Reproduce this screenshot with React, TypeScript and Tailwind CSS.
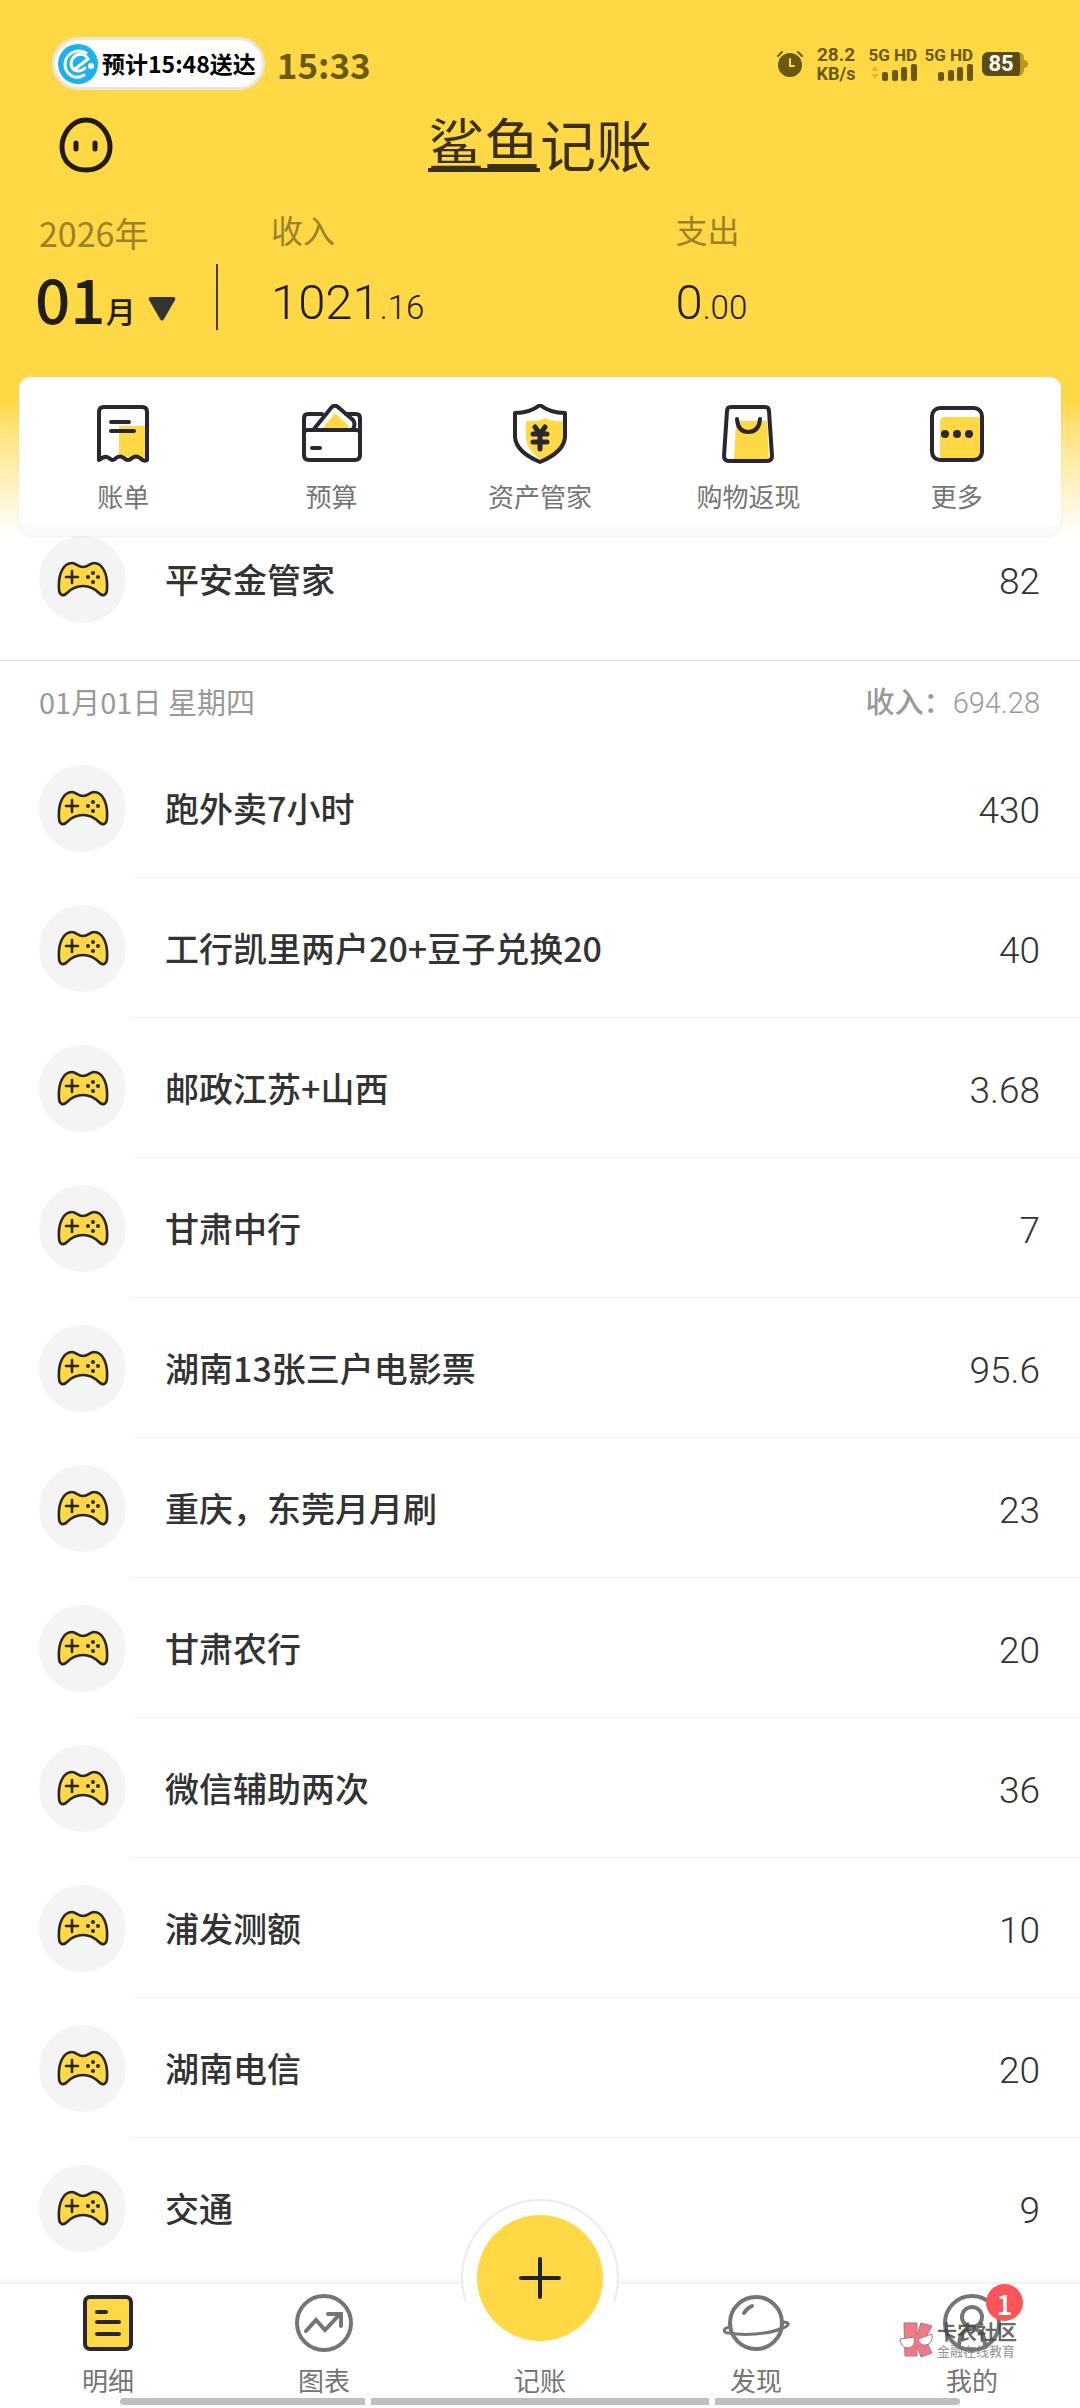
import type { ReactNode } from "react";

type Transaction = {
  id: number;
  name: string;
  amount: string;
};

const previousDay: Transaction[] = [{ id: 1, name: "平安金管家", amount: "82" }];

const newYearDay: Transaction[] = [
  { id: 2, name: "跑外卖7小时", amount: "430" },
  { id: 3, name: "工行凯里两户20+豆子兑换20", amount: "40" },
  { id: 4, name: "邮政江苏+山西", amount: "3.68" },
  { id: 5, name: "甘肃中行", amount: "7" },
  { id: 6, name: "湖南13张三户电影票", amount: "95.6" },
  { id: 7, name: "重庆，东莞月月刷", amount: "23" },
  { id: 8, name: "甘肃农行", amount: "20" },
  { id: 9, name: "微信辅助两次", amount: "36" },
  { id: 10, name: "浦发测额", amount: "10" },
  { id: 11, name: "湖南电信", amount: "20" },
  { id: 12, name: "交通", amount: "9" },
];

function BillIcon() {
  return (
    <svg width="60" height="60" viewBox="0 0 60 60" fill="none" stroke="#2b2731" strokeWidth="4" strokeLinecap="round" strokeLinejoin="round">
      <path d="M26 22H54V54L47 53L41 56L34 52L26 55Z" fill="#ffd945" stroke="none" />
      <path d="M6 56V8Q6 3 11 3H49Q54 3 54 8V56Q51 58 47 54Q43 51 39 54Q35 58 31 54Q27 51 23 54Q20 58 16 54Q12 51 6 56Z" />
      <path d="M18 18H36M18 27H41" />
    </svg>
  );
}

function BudgetIcon() {
  return (
    <svg width="60" height="60" viewBox="0 0 60 60" fill="none" stroke="#2b2731" strokeWidth="4" strokeLinecap="round" strokeLinejoin="round">
      <path d="M20 25L33 9L46 21V25Z" fill="#ffd945" stroke="none" />
      <path d="M20 10H6Q2 10 2 14V51Q2 56 7 56H53Q58 56 58 51V14Q58 10 54 10H44" />
      <path d="M2 29Q2 26 6 26H54Q58 26 58 29" />
      <path d="M12 25L29 4Q32 0 36 3L51 16Q54 20 51 25" />
      <path d="M10 44H18" />
    </svg>
  );
}

function ShieldIcon() {
  return (
    <svg width="60" height="60" viewBox="0 0 60 60" fill="none" stroke="#2b2731" strokeWidth="4" strokeLinecap="round" strokeLinejoin="round">
      <path d="M16 17Q28 18 35 14Q42 18 54 17V34Q50 49 32 56Q16 47 16 32Z" fill="#ffd945" stroke="none" />
      <path d="M30 1Q20 9 5 9V33Q6 48 30 58Q54 48 55 33V9Q40 9 30 1Z" />
      <path d="M25 23L30 30L35 23M23 30H37M23 38H37M30 30V45" strokeWidth="5" />
    </svg>
  );
}

function ShoppingIcon() {
  return (
    <svg width="60" height="60" viewBox="0 0 60 60" fill="none" stroke="#2b2731" strokeWidth="4" strokeLinecap="round" strokeLinejoin="round">
      <path d="M18 17H49L51 56H16Z" fill="#ffd945" stroke="none" />
      <path d="M13 3H47Q51 3 51 7L54 52Q54 57 49 57H11Q6 57 6 52L9 7Q9 3 13 3Z" />
      <path d="M19 15Q20 28 30 28Q41 28 42 15" />
    </svg>
  );
}

function MoreIcon() {
  return (
    <svg width="60" height="60" viewBox="0 0 60 60" fill="none">
      <path d="M13 18Q13 13 18 13H54V56H13Z" fill="#ffd945" />
      <rect x="5" y="4" width="50" height="52" rx="8" stroke="#2b2731" strokeWidth="4" />
      <g fill="#2b2731">
        <circle cx="18" cy="30" r="4" />
        <circle cx="30" cy="30" r="4" />
        <circle cx="42" cy="30" r="4" />
      </g>
    </svg>
  );
}

function GamepadIcon() {
  return (
    <svg width="52" height="36" viewBox="0 0 52 36" fill="none" stroke="#2a2723" strokeWidth="2.6" strokeLinecap="round" strokeLinejoin="round">
      <path d="M15 2C19 2 21 6 26 6C31 6 33 2 37 2C45 2 51 12 50 28C50 34 46 36 42 32C37 27 33 25 26 25C19 25 15 27 10 32C6 36 2 34 2 28C1 12 7 2 15 2Z" fill="#ffd945" />
      <path d="M15 10V22M9 16H21" />
      <g fill="#2a2723" stroke="none">
        <circle cx="36" cy="12" r="2" />
        <circle cx="36" cy="21" r="2" />
        <circle cx="31" cy="16" r="2" />
        <circle cx="41" cy="16" r="2" />
      </g>
    </svg>
  );
}

function FaceIcon() {
  return (
    <svg width="54" height="56" viewBox="0 0 54 56" fill="none" stroke="#221b08" strokeWidth="5" strokeLinecap="round">
      <path d="M27 3C42 3 51 18 51 30C51 44 41 53 27 53C13 53 3 44 3 30C3 18 12 3 27 3Z" />
      <path d="M17 26V32M36 26V32" />
    </svg>
  );
}

function DeliveryLogo() {
  return (
    <svg className="shrink-0" width="40" height="40" viewBox="0 0 40 40" fill="none" stroke="#fff" strokeWidth="3" strokeLinecap="round">
      <circle cx="20" cy="20" r="20" fill="#1fb1ea" stroke="none" />
      <path d="M28 9C19 4 8 9 7 20C7 30 17 37 26 31" />
      <path d="M17 25L30 15C27 9 19 9 15 14C11 20 14 27 20 27C23 27 25 26 27 24" />
      <circle cx="33" cy="22" r="3" fill="#fff" stroke="none" />
    </svg>
  );
}

function AlarmIcon() {
  return (
    <svg width="26" height="26" viewBox="0 0 26 26" fill="none" strokeLinecap="round">
      <circle cx="13" cy="14" r="12" fill="#6a5912" />
      <path d="M1 5L5 1M21 1L25 5" stroke="#6a5912" strokeWidth="2" />
      <path d="M13 8V15H17" stroke="#ffd945" strokeWidth="2" />
    </svg>
  );
}

function Signal({ arrows = false }: { arrows?: boolean }) {
  return (
    <div className="flex w-12 flex-col items-end">
      <span className="text-[17px] leading-4 font-bold whitespace-nowrap">5G HD</span>
      <svg className="mt-px" width="48" height="17" viewBox="0 0 48 17" fill="#6a5912">
        {arrows && <path d="M2 7L6 2L10 7ZM2 10L6 15L10 10Z" fill="#e0b92c" />}
        <rect x="13" y="8" width="6" height="9" rx="2" />
        <rect x="23" y="6" width="6" height="11" rx="2" />
        <rect x="32" y="3" width="6" height="14" rx="2" />
        <rect x="42" y="0" width="6" height="17" rx="2" />
      </svg>
    </div>
  );
}

function StatusBar() {
  return (
    <div className="flex items-center justify-between px-[52px] text-[#6a5912]">
      <div className="flex items-center gap-3">
        <div className="flex h-[53px] items-center gap-1 rounded-full border-3 border-[#ece6d8] bg-white pr-1.5 pl-[3px] text-[23px] font-bold text-black">
          <DeliveryLogo />
          <span>预计15:48送达</span>
        </div>
        <span className="text-[35px] leading-10 font-bold">15:33</span>
      </div>
      <div className="flex items-center gap-2 font-[Roboto,sans-serif]">
        <AlarmIcon />
        <div className="flex w-[50px] flex-col items-center text-[19px] leading-5 font-bold">
          <span>28.2</span>
          <span className="text-lg leading-[18px]">KB/s</span>
        </div>
        <Signal arrows />
        <Signal />
        <div className="flex items-center pl-px">
          <span className="flex h-6 w-[42px] items-center justify-center rounded-md border-r-4 border-[#b8971c] bg-[#5a4c14] text-[22px] leading-6 font-bold text-white">
            85
          </span>
          <span className="h-2 w-1 rounded-r bg-[#b8971c]" />
        </div>
      </div>
    </div>
  );
}

function Total({ label, whole, cents }: { label: string; whole: string; cents: string }) {
  return (
    <div>
      <div className="text-[32px] leading-10 text-[#998229]">{label}</div>
      <div className="mt-[29px] font-[Roboto,sans-serif] text-[49px] leading-[50px] font-light text-[#221b08]">
        {whole}
        <span className="text-[33px]">.{cents}</span>
      </div>
    </div>
  );
}

function Summary() {
  return (
    <section className="mt-9 flex">
      <button type="button" className="flex w-[218px] flex-col items-start pt-1 pl-[35px] text-left">
        <span className="pl-1 text-[34px] leading-10 text-[#998229]">2026年</span>
        <span className="mt-[11px] flex h-[66px] w-full items-center border-r-2 border-[#4a3c14] text-[#221e14]">
          <span className="text-[62px] leading-[66px] font-medium">01</span>
          <span className="self-end text-[30px] leading-10 font-medium">月</span>
          <svg className="mt-6 ml-3" width="28" height="24" viewBox="0 0 28 24" fill="#333">
            <path d="M2 0H26Q28 1 27 3L16 22Q14 25 12 22L1 3Q0 1 2 0Z" />
          </svg>
        </span>
      </button>
      <div className="grid flex-1 grid-cols-2 pl-[53px]">
        <Total label="收入" whole="1021" cents="16" />
        <Total label="支出" whole="0" cents="00" />
      </div>
    </section>
  );
}

function QuickAction({ label, children }: { label: string; children: ReactNode }) {
  return (
    <button type="button" className="flex flex-col items-center gap-3.5 pt-[27px] text-[26px] leading-9 text-[#757575]">
      {children}
      <span>{label}</span>
    </button>
  );
}

function Header() {
  return (
    <header className="sticky top-0 z-10 bg-linear-to-b from-[#ffd945] from-75% to-white pt-[37px]">
      <StatusBar />
      <div className="mt-[27px] grid grid-cols-3 items-center px-[59px]">
        <button type="button" aria-label="客服" className="justify-self-start">
          <FaceIcon />
        </button>
        <h1 className="flex justify-self-center text-[56px] text-[#3a2f12]">
          <span className="h-[54px] border-b-4 border-[#3a2f12] leading-[46px]">鲨鱼</span>
          <span className="leading-[50px]">记账</span>
        </h1>
      </div>
      <Summary />
      <nav className="mx-[19px] mt-11 rounded-xl bg-[#fafafa] pb-[9px] shadow-sm shadow-black/5">
        <div className="grid h-[150px] grid-cols-5 items-start rounded-xl bg-white">
          <QuickAction label="账单">
            <BillIcon />
          </QuickAction>
          <QuickAction label="预算">
            <BudgetIcon />
          </QuickAction>
          <QuickAction label="资产管家">
            <ShieldIcon />
          </QuickAction>
          <QuickAction label="购物返现">
            <ShoppingIcon />
          </QuickAction>
          <QuickAction label="更多">
            <MoreIcon />
          </QuickAction>
        </div>
      </nav>
    </header>
  );
}

function TransactionRow({ transaction }: { transaction: Transaction }) {
  return (
    <li className="group flex h-[140px] items-center pl-[39px]">
      <span className="flex size-[87px] shrink-0 items-center justify-center rounded-full bg-[#f4f4f4]">
        <GamepadIcon />
      </span>
      <div className="ml-1.5 flex h-full flex-1 items-center justify-between border-b border-[#f2f2f2] pr-10 pl-[33px] text-[#333] group-last:border-transparent">
        <span className="text-[34px] font-medium">{transaction.name}</span>
        <span className="pt-1.5 font-[Roboto,sans-serif] text-[37px] font-light">{transaction.amount}</span>
      </div>
    </li>
  );
}

function TransactionList({ transactions }: { transactions: Transaction[] }) {
  return (
    <ul>
      {transactions.map((transaction) => (
        <TransactionRow key={transaction.id} transaction={transaction} />
      ))}
    </ul>
  );
}

function TabItem({ label, badge, children }: { label: string; badge?: number; children?: ReactNode }) {
  return (
    <a href="#" className="flex flex-col items-center text-[26px] leading-9 text-[#757575]">
      <span className="relative flex h-[78px] w-[70px] items-center justify-center">
        {children}
        {badge && (
          <span className="absolute top-0 -right-4 z-10 flex size-[37px] items-center justify-center rounded-full bg-[#fb5558] text-[28px] font-medium text-white">
            {badge}
          </span>
        )}
      </span>
      <span>{label}</span>
    </a>
  );
}

function Watermark() {
  return (
    <div className="pointer-events-none absolute top-[37px] right-[63px] flex items-center gap-1 opacity-80">
      <svg width="34" height="36" viewBox="0 0 34 36" stroke="#8a5a60" strokeWidth="1">
        <path d="M5 1H18V13L22 1L33 4L26 17L33 31L22 35L18 24V34H6Z" fill="#f0566a" />
        <path d="M1 17L15 15Q17 25 9 26Q2 26 1 17ZM19 17L33 12Q34 22 27 23Q21 24 19 17Z" fill="#fff" />
      </svg>
      <div className="text-[#444]">
        <div className="text-xl leading-[22px] font-bold">卡农社区</div>
        <div className="text-[13px] leading-4 text-[#777]">金融在线教育</div>
      </div>
    </div>
  );
}

function TabBar() {
  return (
    <nav className="sticky bottom-0 z-10 mt-auto border-t-2 border-[#f2f2f2] bg-white pb-0.5 shadow-[0_-4px_6px_rgba(0,0,0,0.02)]">
      <div className="absolute -top-[85px] left-1/2 size-[158px] -translate-x-1/2 rounded-full border-2 border-[#ececec] bg-white" />
      <div className="absolute inset-x-0 top-[18px] h-[60px] bg-white" />
      <button
        type="button"
        aria-label="记一笔"
        className="absolute -top-[69px] left-1/2 z-10 flex size-[126px] -translate-x-1/2 items-center justify-center rounded-full bg-[#ffd945]"
      >
        <svg width="42" height="42" viewBox="0 0 42 42" stroke="#222" strokeWidth="4" strokeLinecap="round">
          <path d="M21 2V40M2 21H40" />
        </svg>
      </button>
      <div className="relative grid grid-cols-5">
        <TabItem label="明细">
          <svg width="50" height="56" viewBox="0 0 50 56" fill="none" stroke="#2b2731" strokeWidth="4" strokeLinecap="round">
            <rect x="2" y="2" width="46" height="52" rx="5" fill="#ffd945" />
            <path d="M14 17H23M14 27H36M14 39H36" />
          </svg>
        </TabItem>
        <TabItem label="图表">
          <svg width="58" height="58" viewBox="0 0 58 58" fill="none" stroke="#757575" strokeWidth="4" strokeLinecap="round">
            <circle cx="29" cy="29" r="27" />
            <path d="M11 37L21 26L30 36L45 20M33 20H46V32" />
          </svg>
        </TabItem>
        <TabItem label="记账" />
        <TabItem label="发现">
          <svg width="68" height="58" viewBox="0 0 68 58" fill="none" stroke="#757575" strokeWidth="4" strokeLinecap="round">
            <circle cx="34" cy="29" r="26" />
            <path d="M22 19Q25 14 30 12" />
            <path d="M8 33C1 34 0 39 7 39C22 42 46 40 58 35C68 32 69 28 60 28" strokeWidth="3" />
          </svg>
        </TabItem>
        <TabItem label="我的" badge={1}>
          <svg width="60" height="60" viewBox="0 0 60 60" fill="none" stroke="#757575" strokeWidth="4">
            <circle cx="30" cy="30" r="27" />
            <circle cx="30" cy="24" r="10" />
            <path d="M17 54Q17 36 30 36Q43 36 43 54" />
          </svg>
        </TabItem>
      </div>
      <Watermark />
      <div className="grid h-2 grid-cols-[245fr_338fr_245fr] gap-1.5 px-[120px]">
        <span className="h-[7px] rounded-l-full bg-[#bfbfbf]" />
        <span className="h-[7px] bg-[#bfbfbf]" />
        <span className="h-[7px] rounded-r-full bg-[#bfbfbf]" />
      </div>
    </nav>
  );
}

export default function App() {
  return (
    <div className="flex min-h-screen flex-col bg-white font-['Noto_Sans_CJK_SC',sans-serif]">
      <Header />
      <main className="-mt-[27px]">
        <TransactionList transactions={previousDay} />
        <section className="mt-[11px] border-t border-[#d9d9d9]">
          <div className="flex h-[77px] items-center justify-between pt-1 pr-10 pl-[39px] text-[#999]">
            <h2 className="text-[29px]">01月01日 星期四</h2>
            <span className="pt-0.5 text-[29px] font-medium">
              收入：<span className="font-[Roboto,sans-serif] font-light">694.28</span>
            </span>
          </div>
          <TransactionList transactions={newYearDay} />
        </section>
      </main>
      <TabBar />
    </div>
  );
}
